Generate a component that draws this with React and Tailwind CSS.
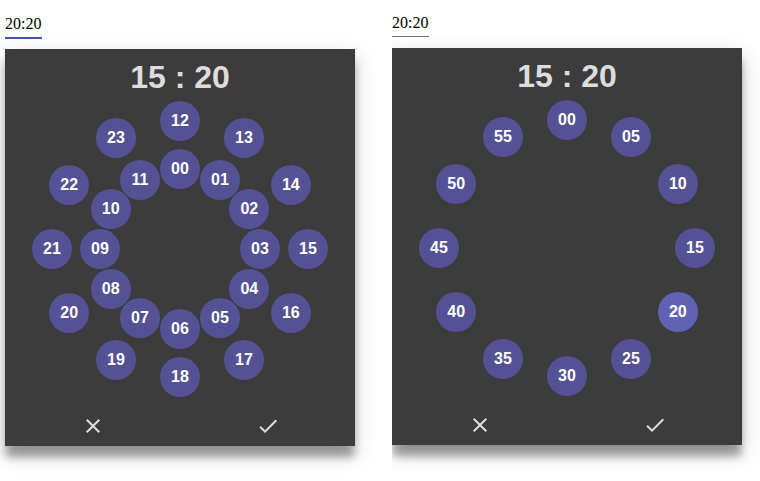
import { MdCheck, MdClose } from "react-icons/md";

const HOURS_OUTER = ["12", "13", "14", "15", "16", "17", "18", "19", "20", "21", "22", "23"];
const HOURS_INNER = ["00", "01", "02", "03", "04", "05", "06", "07", "08", "09", "10", "11"];
const MINUTES = ["00", "05", "10", "15", "20", "25", "30", "35", "40", "45", "50", "55"];

function Ring({ values, radius, selected }) {
  return values.map((value, i) => {
    const angle = (i * Math.PI) / 6;
    return (
      <button
        key={value}
        type="button"
        className={`absolute size-10 rounded-full text-base leading-6 font-bold text-white ${
          value === selected ? "bg-[#6262b5]" : "bg-[#545294]"
        }`}
        style={{
          left: `calc(50% - 20px + ${radius * Math.sin(angle)}px)`,
          top: `calc(50% - 20px - ${radius * Math.cos(angle)}px)`,
        }}
      >
        {value}
      </button>
    );
  });
}

function TimePicker({ label, focused, children }) {
  return (
    <section className="flex flex-col items-start">
      <input
        type="text"
        aria-label={label}
        defaultValue="20:20"
        className={`w-[37px] pb-[3px] font-['Liberation_Serif',serif] text-base leading-5 text-black outline-none ${
          focused ? "mb-[10px] border-b-2 border-[#4355a5]" : "mb-[11px] border-b border-[#757575]"
        }`}
      />
      <div className="w-full max-w-[350px] bg-[#3c3c3c] font-['Liberation_Sans',sans-serif] text-[#dddddd] shadow-[0_12px_8px_-1px_rgba(0,0,0,0.32),0_8px_20px_0_rgba(0,0,0,0.2)]">
        <h2 className="pt-2 pb-1 text-center text-[32px] leading-10 font-bold">15 : 20</h2>
        <div className="relative mx-auto size-[296px]">{children}</div>
        <div className="mt-[9px] grid grid-cols-2">
          <button type="button" aria-label="Cancel" className="flex h-10 items-center justify-center">
            <MdClose size={24} />
          </button>
          <button type="button" aria-label="Confirm" className="flex h-10 items-center justify-center">
            <MdCheck size={24} />
          </button>
        </div>
      </div>
    </section>
  );
}

export default function App() {
  return (
    <main className="flex min-h-screen bg-white">
      <div className="min-w-0 flex-1 overflow-hidden pt-[14px] pb-8 pl-[5px]">
        <TimePicker label="Hour" focused>
          <Ring values={HOURS_OUTER} radius={128} />
          <Ring values={HOURS_INNER} radius={80} />
        </TimePicker>
      </div>
      <div className="w-[368px] overflow-hidden pt-[13px] pb-8">
        <TimePicker label="Minute">
          <Ring values={MINUTES} radius={128} selected="20" />
        </TimePicker>
      </div>
    </main>
  );
}
